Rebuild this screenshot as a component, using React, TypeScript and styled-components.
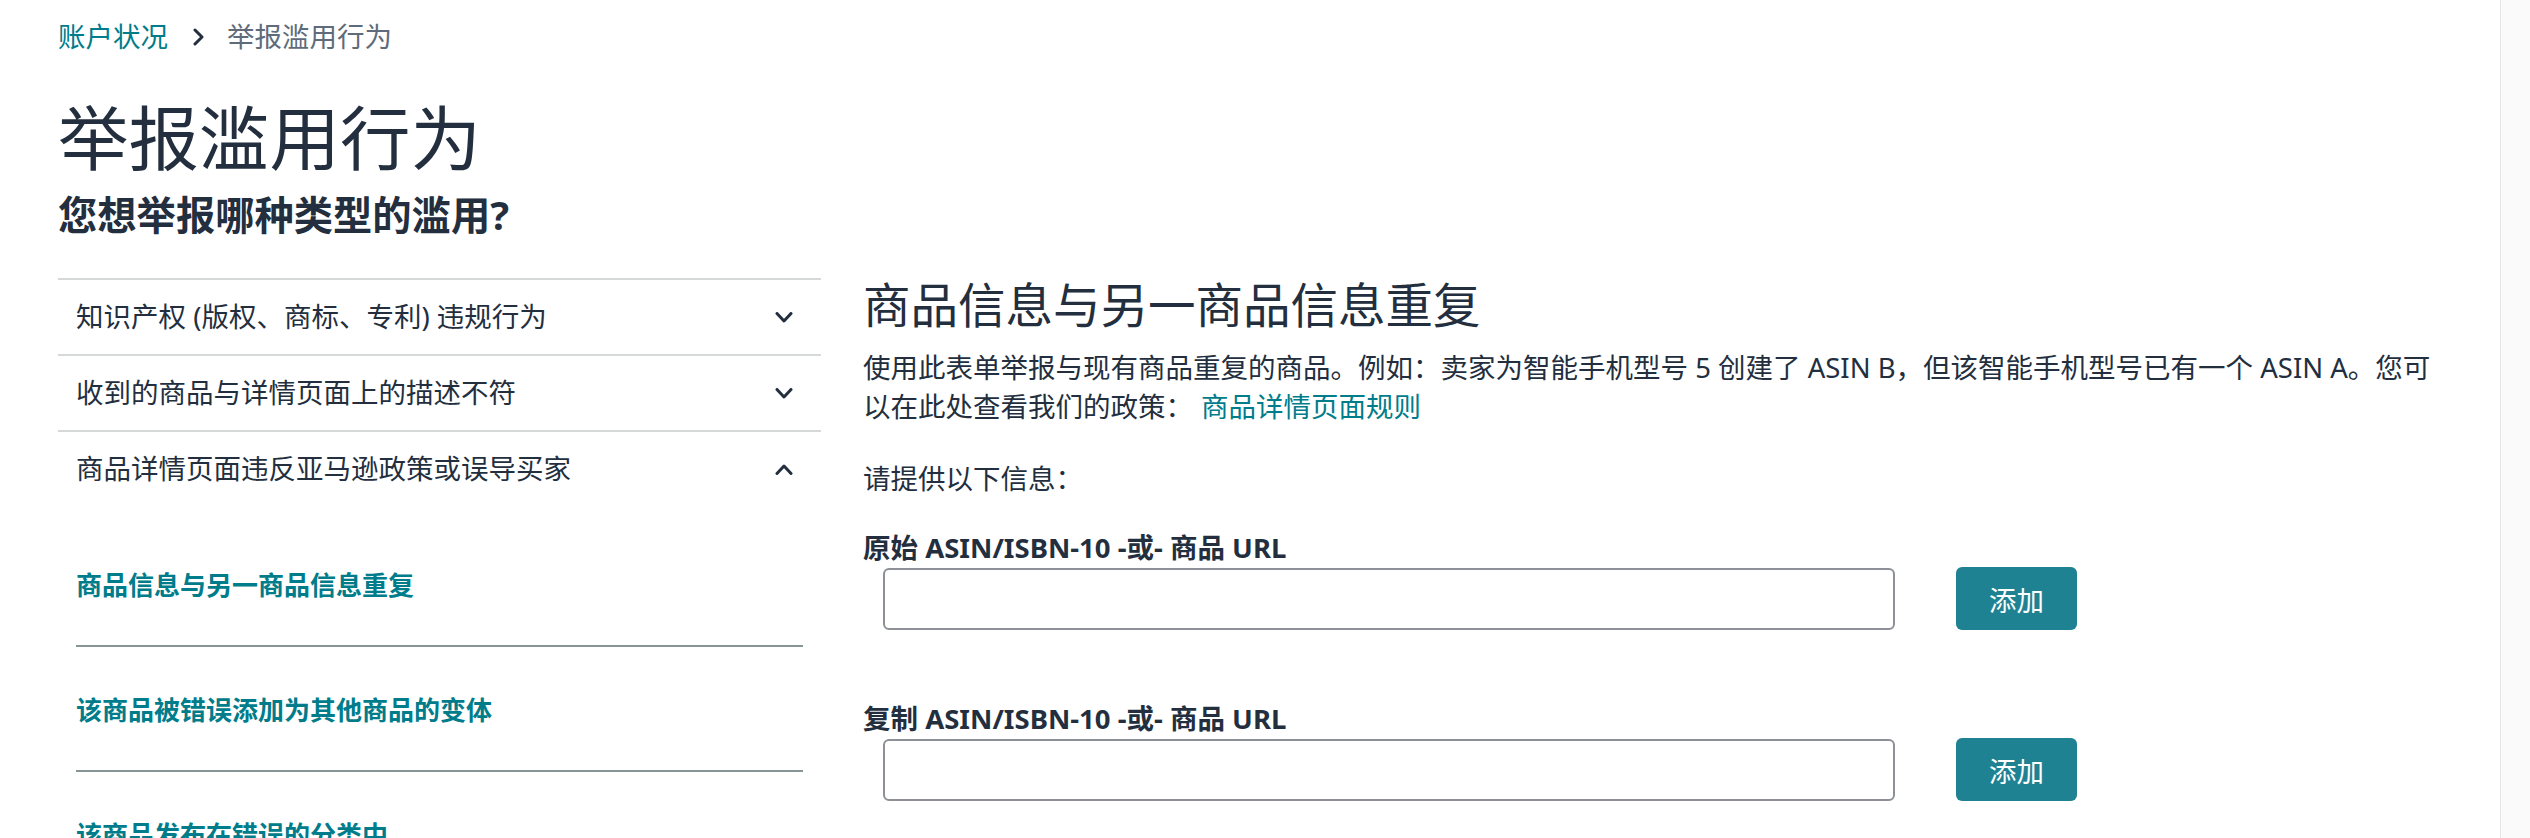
import React from "react";
import styled, { createGlobalStyle } from "styled-components";

const GlobalStyle = createGlobalStyle`
  html, body {
    margin: 0;
    padding: 0;
    background: #ffffff;
  }
  body {
    font-family: "Noto Sans", "Noto Sans CJK SC", sans-serif;
    color: #232f3e;
  }
  *, *::before, *::after {
    box-sizing: border-box;
  }
`;

const Shell = styled.div`
  display: flex;
  min-height: 838px;
  overflow: hidden;
`;

const Main = styled.main`
  flex: 1;
  min-width: 0;
  padding: 17px 0 0 58px;
`;

const ScrollTrack = styled.div`
  flex: none;
  width: 30px;
  border-left: 1px solid #e6e6e6;
  background: #fafafa;
`;

const Crumbs = styled.nav`
  display: flex;
  align-items: center;
  height: 40px;
  font-size: 27.5px;
  line-height: 40px;
`;

const CrumbLink = styled.a`
  color: #007c8a;
  text-decoration: none;
`;

const CrumbSep = styled.span`
  display: flex;
  margin: 0 23px 0 25px;
`;

const CrumbCurrent = styled.span`
  color: #5f6b7a;
`;

const Title = styled.h1`
  margin: 39px 0 0;
  font-size: 70.5px;
  line-height: 84px;
  font-weight: 400;
`;

const Subtitle = styled.h2`
  margin: 11px 0 0;
  font-size: 39.3px;
  line-height: 48px;
  font-weight: 700;
`;

const Columns = styled.div`
  display: flex;
  align-items: flex-start;
  gap: 42px;
  margin-top: 39px;
`;

const Sidebar = styled.div`
  flex: none;
  width: 763px;
`;

const Section = styled.div`
  border-top: 2px solid #d5d9d9;
`;

const SectionHead = styled.button`
  display: flex;
  align-items: center;
  justify-content: space-between;
  width: 100%;
  height: 74px;
  padding: 0 28px 0 18px;
  border: 0;
  background: none;
  font: inherit;
  font-size: 27.5px;
  line-height: 40px;
  color: #232f3e;
  text-align: left;
  cursor: pointer;
`;

const SubList = styled.div`
  margin: 16px 18px 0;
`;

const SubItem = styled.a`
  display: flex;
  align-items: center;
  height: 125px;
  border-bottom: 2px solid #879596;
  font-size: 26px;
  font-weight: 700;
  color: #007c8a;
  text-decoration: none;
`;

const Content = styled.section`
  flex: 1;
  min-width: 0;
`;

const Heading = styled.h2`
  margin: 3px 0 0;
  font-size: 47.5px;
  line-height: 48px;
  font-weight: 400;
`;

const Text = styled.p<{ $gap: number }>`
  margin: ${(p) => p.$gap}px 0 0;
  font-size: 27.5px;
  line-height: 39px;
`;

const InlineLink = styled.a`
  margin-left: 8px;
  color: #007c8a;
  text-decoration: none;
`;

const FieldGroup = styled.div`
  margin-top: 30px;

  & + & {
    margin-top: 69px;
  }
`;

const FieldLabel = styled.label`
  display: block;
  font-size: 27.5px;
  line-height: 39px;
  font-weight: 700;
`;

const FieldRow = styled.div`
  display: flex;
  align-items: center;
  padding-left: 20px;
`;

const Input = styled.input`
  width: 1012px;
  height: 62px;
  border: 2px solid #8d9096;
  border-radius: 6px;
  padding: 0 16px;
  font: inherit;
  font-size: 27.5px;
  outline: none;
`;

const AddButton = styled.button`
  width: 121px;
  height: 63px;
  margin-left: 61px;
  border: 0;
  border-radius: 6px;
  background: #1e8292;
  color: #ffffff;
  font: inherit;
  font-size: 27.5px;
  cursor: pointer;
`;

const Chevron = ({ up }: { up?: boolean }) => (
  <svg width="18" height="11" viewBox="0 0 18 11" fill="none">
    <polyline
      points={up ? "2,9.5 9,2 16,9.5" : "2,1.5 9,9 16,1.5"}
      stroke="#232f3e"
      strokeWidth="3"
      strokeLinecap="round"
      strokeLinejoin="round"
    />
  </svg>
);

const sections = [
  { label: "知识产权 (版权、商标、专利) 违规行为", open: false },
  { label: "收到的商品与详情页面上的描述不符", open: false },
  { label: "商品详情页面违反亚马逊政策或误导买家", open: true },
];

const subItems = [
  "商品信息与另一商品信息重复",
  "该商品被错误添加为其他商品的变体",
  "该商品发布在错误的分类中",
];

const fields = ["原始 ASIN/ISBN-10 -或- 商品 URL", "复制 ASIN/ISBN-10 -或- 商品 URL"];

const App = () => {
  return (
    <Shell>
      <GlobalStyle />
      <Main>
        <Crumbs>
          <CrumbLink href="#">账户状况</CrumbLink>
          <CrumbSep>
            <svg width="11" height="18" viewBox="0 0 11 18" fill="none">
              <polyline
                points="2,2 9,9 2,16"
                stroke="#232f3e"
                strokeWidth="3"
                strokeLinecap="round"
                strokeLinejoin="round"
              />
            </svg>
          </CrumbSep>
          <CrumbCurrent>举报滥用行为</CrumbCurrent>
        </Crumbs>
        <Title>举报滥用行为</Title>
        <Subtitle>您想举报哪种类型的滥用?</Subtitle>

        <Columns>
          <Sidebar>
            {sections.map((s) => (
              <Section key={s.label}>
                <SectionHead>
                  <span>{s.label}</span>
                  <Chevron up={s.open} />
                </SectionHead>
                {s.open && (
                  <SubList>
                    {subItems.map((item) => (
                      <SubItem href="#" key={item}>
                        {item}
                      </SubItem>
                    ))}
                  </SubList>
                )}
              </Section>
            ))}
          </Sidebar>

          <Content>
            <Heading>商品信息与另一商品信息重复</Heading>
            <Text $gap={19}>
              使用此表单举报与现有商品重复的商品。例如：卖家为智能手机型号 5 创建了 ASIN B，但该智能手机型号已有一个 ASIN A。您可
              <br />
              以在此处查看我们的政策：
              <InlineLink href="#">商品详情页面规则</InlineLink>
            </Text>
            <Text $gap={33}>请提供以下信息：</Text>

            {fields.map((f) => (
              <FieldGroup key={f}>
                <FieldLabel>{f}</FieldLabel>
                <FieldRow>
                  <Input type="text" />
                  <AddButton>添加</AddButton>
                </FieldRow>
              </FieldGroup>
            ))}
          </Content>
        </Columns>
      </Main>
      <ScrollTrack />
    </Shell>
  );
};

export default App;
